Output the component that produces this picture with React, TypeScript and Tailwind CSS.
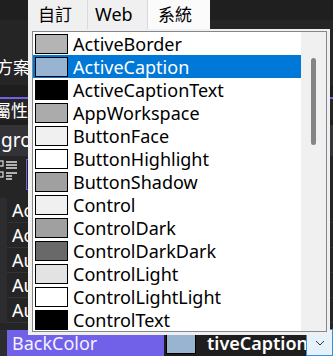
import React from "react";

const sysColors = [
  { name: "ActiveBorder", color: "bg-[#b4b4b4]" },
  { name: "ActiveCaption", color: "bg-[#99b4d1]" },
  { name: "ActiveCaptionText", color: "bg-[#000000]" },
  { name: "AppWorkspace", color: "bg-[#ababab]" },
  { name: "ButtonFace", color: "bg-[#f0f0f0]" },
  { name: "ButtonHighlight", color: "bg-[#ffffff]" },
  { name: "ButtonShadow", color: "bg-[#a0a0a0]" },
  { name: "Control", color: "bg-[#f0f0f0]" },
  { name: "ControlDark", color: "bg-[#a0a0a0]" },
  { name: "ControlDarkDark", color: "bg-[#696969]" },
  { name: "ControlLight", color: "bg-[#e3e3e3]" },
  { name: "ControlLightLight", color: "bg-[#ffffff]" },
  { name: "ControlText", color: "bg-[#000000]" },
];

const props = ["Ac", "Ac", "Au", "Au", "Au"];

const SortIcon = () => (
  <svg width="20" height="22" viewBox="0 0 20 22" fill="none">
    <rect x="-2" y="2" width="5" height="5" stroke="#e0e0e0" strokeWidth="1.2" />
    <rect x="-2" y="13" width="5" height="5" stroke="#e0e0e0" strokeWidth="1.2" />
    <path d="M6 3h11M6 6h11M6 9h11M6 14h11M6 17h6M6 20h6" stroke="#e0e0e0" strokeWidth="1.5" />
  </svg>
);

const Chevron = () => (
  <svg width="10" height="6" viewBox="0 0 10 6" fill="none">
    <path d="M1 1l4 4 4-4" stroke="#333" strokeWidth="1" />
  </svg>
);

const ColorPopup = () => (
  <div className="absolute left-[28px] top-0 w-[302px] h-[329px] flex flex-col">
    <div className="flex h-[29px] text-black">
      <div className="w-[60px] h-full bg-[#f0f0f0] border-r border-[#d9d9d9] pl-[10px] pt-[4px] text-[17px] leading-[20px] font-['Noto_Sans_CJK_TC',sans-serif]">
        自訂
      </div>
      <div className="w-[60px] h-full bg-[#f0f0f0] border-r border-[#d9d9d9] pl-[7px] pt-[3px] text-[18px] leading-[22px]">
        Web
      </div>
      <div className="w-[62px] h-[30px] bg-[#fbfbfb] pl-[10px] pt-[4px] text-[17px] leading-[20px] font-['Noto_Sans_CJK_TC',sans-serif]">
        系統
      </div>
    </div>
    <div className="flex-1 bg-[#f0f0f0] pl-[4px] pt-[2px] pr-[3px] pb-[3px]">
      <div className="flex h-full border border-[#828790] bg-white">
        <div className="w-[268px] overflow-hidden">
          {sysColors.map((c, i) => (
            <div
              key={c.name}
              className={
                "flex items-center h-[23px] pl-[2px] " +
                (i === 1 ? "bg-[#0078d7] text-white" : "text-black")
              }
            >
              <div className={"w-[33px] h-[20px] shrink-0 border border-black " + c.color} />
              <span className="ml-[5px] text-[18px] leading-none whitespace-nowrap">{c.name}</span>
            </div>
          ))}
        </div>
        <div className="w-[25px] bg-[#f0f0f0] pl-[10px] pt-[26px]">
          <div className="w-[5px] h-[87px] rounded-full bg-[#858585]" />
        </div>
      </div>
    </div>
  </div>
);

export default function App() {
  return (
    <div className="relative w-[333px] h-[356px] overflow-hidden bg-[#1f1f1f] font-['Noto_Sans',sans-serif] text-white">
      <div className="flex flex-col w-full h-full">
        <div className="h-[20px] bg-[#1f1f1f]" />
        <div className="h-[65px] bg-[#252526] flex items-end pb-[8px]">
          <span className="-ml-[4px] text-[17px] leading-[20px] font-['Noto_Sans_CJK_TC',sans-serif]">
            方案
          </span>
        </div>
        <div className="h-[12px] bg-[#1e1e1e]" />
        <div className="h-[2px] bg-[#7160e8]" />
        <div className="h-[22px] bg-[#252526] flex items-center">
          <span className="-ml-[6px] text-[17px] leading-[20px] font-['Noto_Sans_CJK_TC',sans-serif]">
            屬性
          </span>
        </div>
        <div className="h-[5px] bg-[#1e1e1e]" />
        <div className="h-[31px] bg-[#333337] flex items-center">
          <span className="ml-[1px] text-[19px] leading-none">gro</span>
        </div>
        <div className="h-[42px] bg-[#252526] flex items-start pt-[3px] gap-[6px]">
          <SortIcon />
          <div className="w-[10px] h-[31px] border border-[#7160e8]" />
        </div>
        <div className="flex flex-col">
          {props.map((p, i) => (
            <div key={i} className="flex h-[25px]">
              <div className="w-[7px] bg-[#2d2d30]" />
              <div className="flex-1 bg-[#252526] border-b border-[#333337] flex items-center pl-[5px] text-[18px]">
                {p}
              </div>
            </div>
          ))}
        </div>
        <div className="h-[7px] bg-[#252526]" />
        <div className="flex h-[26px]">
          <div className="w-[7px] bg-[#2d2d30]" />
          <div className="w-[157px] bg-[#7160e8] flex items-center pl-[5px] text-[18px] leading-none text-[#f4f2ff]">
            BackColor
          </div>
          <div className="w-[142px] bg-[#1e1e1e] flex items-center pl-[2px] overflow-hidden">
            <div className="w-[30px] h-[22px] shrink-0 border border-black bg-[#99b4d1]" />
            <span className="ml-[11px] text-[18px] font-semibold leading-none whitespace-nowrap">tiveCaption</span>
          </div>
          <div className="flex-1 -mt-[1px] bg-[#e5f1fb] border border-[#3d8ddb] flex items-center justify-center">
            <Chevron />
          </div>
        </div>
      </div>
      <ColorPopup />
    </div>
  );
}
